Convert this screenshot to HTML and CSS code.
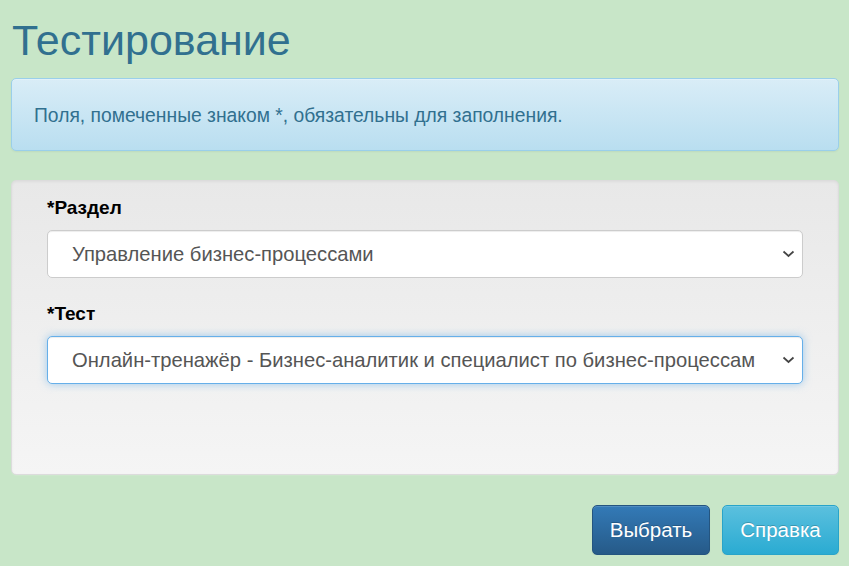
FILE: index.html
```html
<!DOCTYPE html>
<html lang="ru">
<head>
    <meta charset="UTF-8">
    <meta name="viewport" content="width=device-width, initial-scale=1.0">
    <title>Тестирование</title>
    <link rel="stylesheet" href="styles.css">
</head>
<body>
    <div class="page">
        <h1 class="page-title">Тестирование</h1>

        <div class="alert-info">
            Поля, помеченные знаком *, обязательны для заполнения.
        </div>

        <!-- Форма выбора теста -->
        <div class="well">
            <div class="form-group">
                <label for="section">*Раздел</label>
                <div class="select-wrap">
                    <select id="section" class="form-control">
                        <option>Управление бизнес-процессами</option>
                    </select>
                    <svg class="chevron" width="13" height="8" viewBox="0 0 13 8"><path d="M1.5 1.5 L6.5 6 L11.5 1.5" fill="none" stroke="#444" stroke-width="1.7"/></svg>
                </div>
            </div>
            <div class="form-group">
                <label for="test">*Тест</label>
                <div class="select-wrap">
                    <select id="test" class="form-control focused">
                        <option>Онлайн-тренажёр - Бизнес-аналитик и специалист по бизнес-процессам</option>
                    </select>
                    <svg class="chevron" width="13" height="8" viewBox="0 0 13 8"><path d="M1.5 1.5 L6.5 6 L11.5 1.5" fill="none" stroke="#444" stroke-width="1.7"/></svg>
                </div>
            </div>
        </div>

        <div class="actions">
            <button class="btn btn-primary">Выбрать</button>
            <button class="btn btn-info">Справка</button>
        </div>
    </div>
</body>
</html>
```

FILE: styles.css
```css
body {
    margin: 0;
    background-color: #c8e6c8;
    font-family: "Liberation Sans", Arial, sans-serif;
    color: #333;
}
.page {
    padding: 0 10px 0 11px;
}
.page-title {
    margin: 0;
    padding: 14px 0 0 1px;
    font-size: 43px;
    font-weight: normal;
    line-height: 52px;
    color: #31708f;
}
.alert-info {
    margin-top: 12px;
    padding: 26px 22px 24px 22px;
    font-size: 19.3px;
    line-height: 21px;
    color: #31708f;
    background-image: linear-gradient(to bottom, #d9edf7 0, #b9def0 100%);
    border: 1px solid #9acfea;
    border-radius: 5px;
    box-shadow: inset 0 1px 0 rgba(255, 255, 255, 0.25), 0 1px 2px rgba(0, 0, 0, 0.05);
}
.well {
    margin-top: 29px;
    height: 295px;
    box-sizing: border-box;
    padding: 16px 35px 0 35px;
    background-image: linear-gradient(to bottom, #e8e8e8 0, #f5f5f5 100%);
    border: 1px solid #dcdcdc;
    border-radius: 5px;
    box-shadow: inset 0 1px 3px rgba(0, 0, 0, 0.05), 0 1px 0 rgba(255, 255, 255, 0.1);
}
.form-group {
    margin-bottom: 25px;
}
.form-group label {
    display: block;
    margin-bottom: 11px;
    font-size: 19px;
    font-weight: bold;
    line-height: 22px;
    color: #000;
}
.select-wrap {
    position: relative;
}
.form-control {
    display: block;
    width: 100%;
    height: 48px;
    box-sizing: border-box;
    padding: 0 40px 0 24px;
    font-family: "Liberation Sans", Arial, sans-serif;
    font-size: 20.2px;
    color: #555;
    background-color: #fff;
    border: 1px solid #ccc;
    border-radius: 5px;
    box-shadow: inset 0 1px 1px rgba(0, 0, 0, 0.075);
    appearance: none;
    -webkit-appearance: none;
}
.form-control.focused {
    border-color: #66afe9;
    outline: 0;
    box-shadow: inset 0 1px 1px rgba(0, 0, 0, 0.075), 0 0 8px rgba(102, 175, 233, 0.6);
}
.chevron {
    position: absolute;
    right: 8px;
    top: 20px;
    pointer-events: none;
}
.actions {
    display: flex;
    justify-content: flex-end;
    gap: 12px;
    margin-top: 30px;
}
.btn {
    height: 50px;
    padding: 0 16px;
    font-family: "Liberation Sans", Arial, sans-serif;
    font-size: 20.5px;
    color: #fff;
    border-radius: 5px;
    cursor: pointer;
    text-shadow: 0 -1px 0 rgba(0, 0, 0, 0.2);
    box-shadow: inset 0 1px 0 rgba(255, 255, 255, 0.15), 0 1px 1px rgba(0, 0, 0, 0.075);
}
.btn-primary {
    width: 118px;
    background-image: linear-gradient(to bottom, #337ab7 0, #265a88 100%);
    border: 1px solid #245580;
}
.btn-info {
    width: 117px;
    background-image: linear-gradient(to bottom, #5bc0de 0, #2aabd2 100%);
    border: 1px solid #28a4c9;
}
```
